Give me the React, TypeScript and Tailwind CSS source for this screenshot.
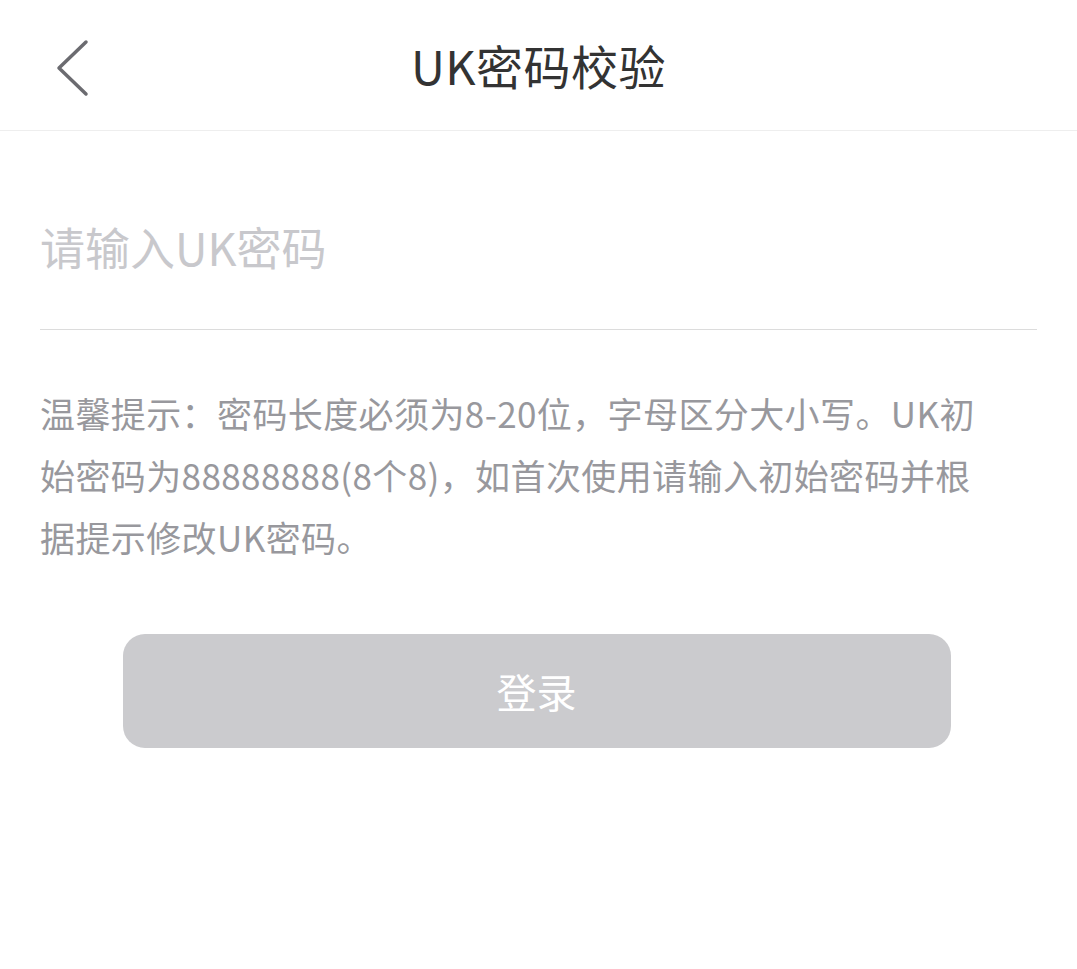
const font = { fontFamily: '"Noto Sans CJK SC", "Noto Sans", sans-serif' };

function BackIcon() {
  return (
    <svg width="36" height="60" viewBox="0 0 36 60" fill="none">
      <polyline
        points="31,4 4,30 31,56"
        stroke="#6b6b70"
        strokeWidth="3.5"
        strokeLinecap="round"
        strokeLinejoin="round"
      />
    </svg>
  );
}

export default function App() {
  return (
    <div className="min-h-screen bg-white" style={font}>
      <header className="relative flex h-[131px] items-center justify-center border-b border-[#eeeeee]">
        <button className="absolute left-[55px] top-[38px]">
          <BackIcon />
        </button>
        <h1 className="text-[47px] font-normal leading-none tracking-[0.5px] text-[#333333] -mt-[2px]">UK密码校验</h1>
      </header>

      <div className="mx-[40px] border-b border-[#dcdcdc] pt-[75px] pb-[43px]">
        <input
          type="password"
          placeholder="请输入UK密码"
          className="h-[80px] w-full bg-transparent text-[45px] text-[#333] outline-none placeholder:text-[#c8c8cc]"
        />
      </div>

      <p className="mx-[40px] mt-[52px] text-[35px] leading-[62px] tracking-[0.4px] text-[#98989d]">
        温馨提示：密码长度必须为8-20位，字母区分大小写。UK初
        <br />
        始密码为88888888(8个8)，如首次使用请输入初始密码并根
        <br />
        据提示修改UK密码。
      </p>

      <div className="mt-[66px] flex justify-center pr-[4px]">
        <button className="flex h-[114px] w-[828px] items-center justify-center rounded-[22px] bg-[#cbcbce] text-[40px] text-white">
          登录
        </button>
      </div>
    </div>
  );
}
